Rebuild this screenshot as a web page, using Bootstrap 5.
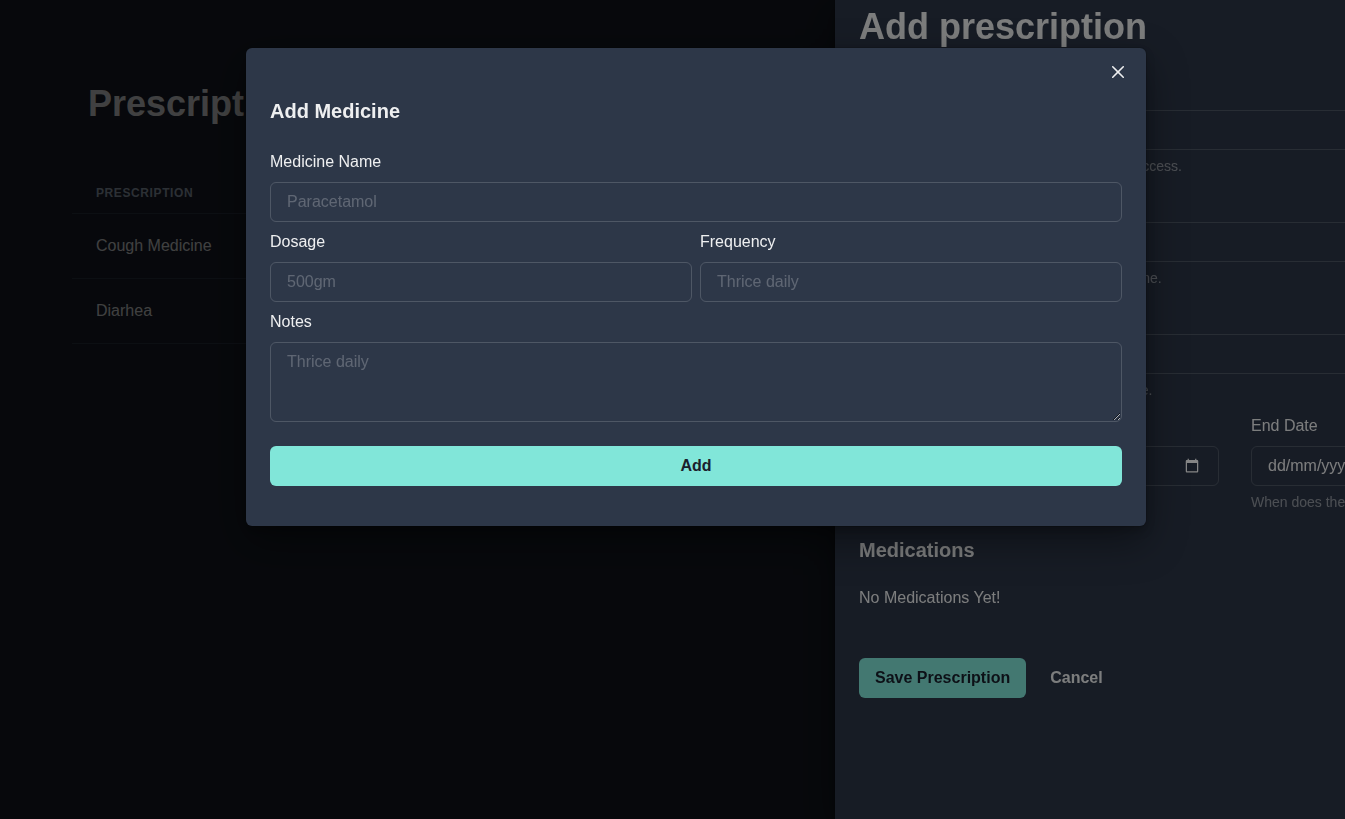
<!DOCTYPE html>
<html lang="en-GB">
<head>
<meta charset="utf-8">
<meta name="viewport" content="width=device-width, initial-scale=1">
<title>Prescriptions</title>
<link href="https://cdn.jsdelivr.net/npm/bootstrap@5.3.0/dist/css/bootstrap.min.css" rel="stylesheet">
<style>
  body { font-family: "Liberation Sans", Arial, sans-serif; background: #1a202c; color: rgba(255,255,255,.92); line-height: 24px; overflow: hidden; color-scheme: dark; }
  h1, h2 { font-weight: 700; color: inherit; margin: 0; }
  h1 { font-size: 36px; line-height: 43px; }
  h2 { font-size: 20px; line-height: 24px; }
  .page-main { padding: 82px 72px; }
  .rx-table { width: 100%; margin-top: 48px; border-collapse: collapse; }
  .rx-table th { padding: 12px 24px; font-size: 12px; line-height: 16px; letter-spacing: .05em; text-transform: uppercase; color: #a0aec0; border-bottom: 1px solid #2d3748; }
  .rx-table td { padding: 20px 24px; border-bottom: 1px solid #2d3748; }
  .scrim { background: rgba(0,0,0,.48); z-index: 10; }
  .sheet { background: #2d3748; box-shadow: 0 0 0 1px rgba(0,0,0,.1), 0 5px 10px rgba(0,0,0,.2), 0 15px 40px rgba(0,0,0,.4); }
  .drawer { z-index: 20; width: 800px; right: -290px; padding: 5px 24px; }
  .drawer form { margin-top: 30px; }
  .dialog-scrim { z-index: 30; }
  .dialog-layer { z-index: 40; right: -47px; padding-top: 48px; }
  .dialog-box { width: 900px; border-radius: 6px; padding: 51px 24px 40px; }
  .dialog-box form { margin-top: 27px; }
  .form-label { display: block; margin-bottom: 8px; }
  .form-control, .form-control:focus { color: inherit; background-color: transparent; border: 1px solid rgba(255,255,255,.16); border-radius: 6px; padding: 0 16px; height: 40px; line-height: 24px; box-shadow: none; }
  .form-control::placeholder { color: rgba(255,255,255,.24); opacity: 1; }
  .date-text::placeholder { color: rgba(255,255,255,.92); }
  textarea.form-control { height: 80px; min-height: 80px; padding: 7px 16px; resize: vertical; }
  .help { font-size: 14px; line-height: 16px; margin: 8px 0 0; color: rgba(255,255,255,.48); }
  .date-row { gap: 32px; }
  .date-row > div { flex: 1 1 0; }
  .btn { height: 40px; border-radius: 6px; padding: 0 16px; line-height: 24px; font-weight: 700; border: 0; }
  .btn-mint, .btn-mint:hover { background: #81e6d9; color: #1a202c; }
  .btn-plain, .btn-plain:hover { color: rgba(255,255,255,.92); }
  .x-button { width: 32px; height: 32px; top: 8px; right: 12px; padding: 0; }
</style>
</head>
<body>
<main class="page-main vh-100">
  <h1 class="px-3">Prescriptions</h1>
  <table class="rx-table">
    <thead><tr><th scope="col">Prescription</th></tr></thead>
    <tbody><tr><td>Cough Medicine</td></tr><tr><td>Diarhea</td></tr></tbody>
  </table>
</main>

<div class="scrim position-fixed top-0 start-0 w-100 h-100"></div>
<aside class="drawer sheet position-fixed top-0 bottom-0">
  <h1>Add prescription</h1>
  <form class="d-flex flex-column gap-3">
    <div>
      <label class="form-label" for="rxTitle">Title</label>
      <input class="form-control" id="rxTitle" type="text">
      <p class="help">Give your prescription a name for later easy access.</p>
    </div>
    <div>
      <label class="form-label" for="rxDoctor">Doctor</label>
      <input class="form-control" id="rxDoctor" type="text">
      <p class="help">Name of the person who gave you this medicine.</p>
    </div>
    <div>
      <label class="form-label" for="rxCondition">Condition</label>
      <input class="form-control" id="rxCondition" type="text">
      <p class="help">The condition this prescription is meant to cure.</p>
    </div>
    <div class="date-row d-flex">
      <div>
        <label class="form-label" for="rxStart">Start Date</label>
        <input class="form-control" id="rxStart" type="date">
        <p class="help">When does the course start?</p>
      </div>
      <div>
        <label class="form-label" for="rxEnd">End Date</label>
        <input class="form-control date-text" id="rxEnd" type="text" placeholder="dd/mm/yyyy">
        <p class="help">When does the course end?</p>
      </div>
    </div>
    <h2 class="mt-2 pt-1">Medications</h2>
    <p class="mb-0 mt-2">No Medications Yet!</p>
    <div class="d-flex gap-2 mt-4 pt-2">
      <button class="btn btn-mint" type="button">Save Prescription</button>
      <button class="btn btn-plain" type="button">Cancel</button>
    </div>
  </form>
</aside>

<div class="scrim dialog-scrim position-fixed top-0 start-0 w-100 h-100"></div>
<div class="dialog-layer position-fixed top-0 start-0 bottom-0 d-flex justify-content-center align-items-start">
  <section class="dialog-box sheet position-relative" role="dialog" aria-labelledby="dialogTitle">
    <button class="btn btn-plain x-button position-absolute d-flex align-items-center justify-content-center" type="button" aria-label="Close">
      <svg width="12" height="12" viewBox="0 0 24 24" fill="currentColor" aria-hidden="true"><path d="M.439,21.44a1.5,1.5,0,0,0,2.122,2.121L11.823,14.3a.25.25,0,0,1,.354,0l9.262,9.263a1.5,1.5,0,1,0,2.122-2.121L14.3,12.177a.25.25,0,0,1,0-.354l9.263-9.262A1.5,1.5,0,0,0,21.439.44L12.177,9.7a.25.25,0,0,1-.354,0L2.561.44A1.5,1.5,0,0,0,.439,2.561L9.7,11.823a.25.25,0,0,1,0,.354Z"/></svg>
    </button>
    <h2 id="dialogTitle">Add Medicine</h2>
    <form class="d-flex flex-column gap-2">
      <div>
        <label class="form-label" for="medName">Medicine Name</label>
        <input class="form-control" id="medName" type="text" placeholder="Paracetamol">
      </div>
      <div class="row gx-2">
        <div class="col-6">
          <label class="form-label" for="medDosage">Dosage</label>
          <input class="form-control" id="medDosage" type="text" placeholder="500gm">
        </div>
        <div class="col-6">
          <label class="form-label" for="medFrequency">Frequency</label>
          <input class="form-control" id="medFrequency" type="text" placeholder="Thrice daily">
        </div>
      </div>
      <div>
        <label class="form-label" for="medNotes">Notes</label>
        <textarea class="form-control" id="medNotes" placeholder="Thrice daily"></textarea>
      </div>
      <button class="btn btn-mint w-100 mt-3" type="button">Add</button>
    </form>
  </section>
</div>
<script src="https://cdn.jsdelivr.net/npm/bootstrap@5.3.0/dist/js/bootstrap.bundle.min.js"></script>
</body>
</html>
